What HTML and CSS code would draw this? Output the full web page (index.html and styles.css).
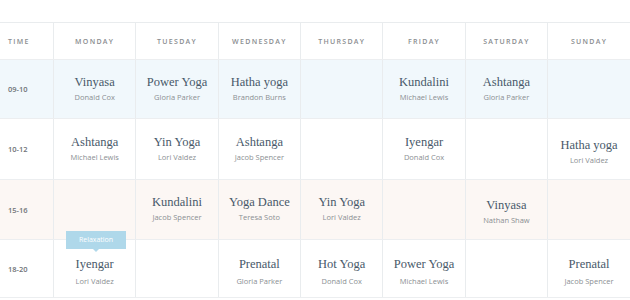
FILE: index.html
```html
<!DOCTYPE html>
<html>
<head>
<meta charset="utf-8">
<link rel="stylesheet" href="styles.css">
</head>
<body>
<table class="schedule">
  <thead>
    <tr class="head">
      <th class="time-col">Time</th>
      <th>Monday</th>
      <th>Tuesday</th>
      <th>Wednesday</th>
      <th>Thursday</th>
      <th>Friday</th>
      <th>Saturday</th>
      <th>Sunday</th>
    </tr>
  </thead>
  <tbody>
    <tr class="row r1 blue">
      <td class="time">09-10</td>
      <td><div class="cls">Vinyasa</div><div class="who">Donald Cox</div></td>
      <td><div class="cls">Power Yoga</div><div class="who">Gloria Parker</div></td>
      <td><div class="cls">Hatha yoga</div><div class="who">Brandon Burns</div></td>
      <td></td>
      <td><div class="cls">Kundalini</div><div class="who">Michael Lewis</div></td>
      <td><div class="cls">Ashtanga</div><div class="who">Gloria Parker</div></td>
      <td></td>
    </tr>
    <tr class="row r2">
      <td class="time">10-12</td>
      <td><div class="cls">Ashtanga</div><div class="who">Michael Lewis</div></td>
      <td><div class="cls">Yin Yoga</div><div class="who">Lori Valdez</div></td>
      <td><div class="cls">Ashtanga</div><div class="who">Jacob Spencer</div></td>
      <td></td>
      <td><div class="cls">Iyengar</div><div class="who">Donald Cox</div></td>
      <td></td>
      <td><div class="cls low">Hatha yoga</div><div class="who">Lori Valdez</div></td>
    </tr>
    <tr class="row r3 peach">
      <td class="time">15-16</td>
      <td></td>
      <td><div class="cls">Kundalini</div><div class="who">Jacob Spencer</div></td>
      <td><div class="cls">Yoga Dance</div><div class="who">Teresa Soto</div></td>
      <td><div class="cls">Yin Yoga</div><div class="who">Lori Valdez</div></td>
      <td></td>
      <td><div class="cls low">Vinyasa</div><div class="who">Nathan Shaw</div></td>
      <td></td>
    </tr>
    <tr class="row r4">
      <td class="time">18-20</td>
      <td class="has-tip"><span class="tip">Relaxation</span><div class="cls">Iyengar</div><div class="who">Lori Valdez</div></td>
      <td></td>
      <td><div class="cls">Prenatal</div><div class="who">Gloria Parker</div></td>
      <td><div class="cls">Hot Yoga</div><div class="who">Donald Cox</div></td>
      <td><div class="cls">Power Yoga</div><div class="who">Michael Lewis</div></td>
      <td></td>
      <td><div class="cls">Prenatal</div><div class="who">Jacob Spencer</div></td>
    </tr>
  </tbody>
</table>
</body>
</html>
```

FILE: styles.css
```css
html, body {
  margin: 0;
  padding: 0;
  background: #ffffff;
}

body {
  padding-top: 22px;
  font-family: "Open Sans", "Liberation Sans", sans-serif;
}

.schedule {
  width: 630px;
  table-layout: fixed;
  border-collapse: collapse;
  border-top: 1px solid #e9ecee;
  border-bottom: 1px solid #e6e9eb;
}

.schedule th,
.schedule td {
  border-right: 1px solid #e9ecee;
  border-bottom: 1px solid #eceef0;
  padding: 0;
  text-align: center;
  vertical-align: middle;
}

.schedule th:last-child,
.schedule td:last-child {
  border-right: none;
}

.schedule th {
  height: 36px;
  font-size: 7px;
  font-weight: 600;
  letter-spacing: 1.3px;
  text-transform: uppercase;
  color: #8a8d90;
}

.schedule .time-col {
  width: 45px;
  text-align: left;
  padding-left: 8px;
}

.time {
  text-align: left !important;
  padding-left: 8px !important;
  font-size: 7.5px;
  font-weight: 600;
  color: #6f7377;
}

.r1 td { height: 58px; }
.r2 td { height: 60px; }
.r3 td { height: 59px; }
.r4 td { height: 57px; }

.blue td { background: #f1f8fc; }
.peach td { background: #fcf7f4; }

.cls {
  font-family: "Liberation Serif", "Times New Roman", serif;
  font-size: 12.5px;
  line-height: 15px;
  color: #48596a;
  margin-top: -2px;
}

.cls.low {
  margin-top: 4px;
}

.who {
  font-size: 7.5px;
  line-height: 10px;
  margin-top: 2px;
  color: #8b8f93;
}

.r4 .cls { margin-top: 6px; }
.r4 .who { margin-top: 4px; }

.has-tip {
  position: relative;
}

.tip {
  position: absolute;
  left: 12px;
  top: -9px;
  width: 60px;
  height: 18px;
  line-height: 18px;
  background: #afd8ea;
  color: #ffffff;
  font-size: 7px;
  text-align: center;
}

.tip::after {
  content: "";
  position: absolute;
  left: 27px;
  bottom: -3px;
  border-left: 3px solid transparent;
  border-right: 3px solid transparent;
  border-top: 3px solid #afd8ea;
}
```
